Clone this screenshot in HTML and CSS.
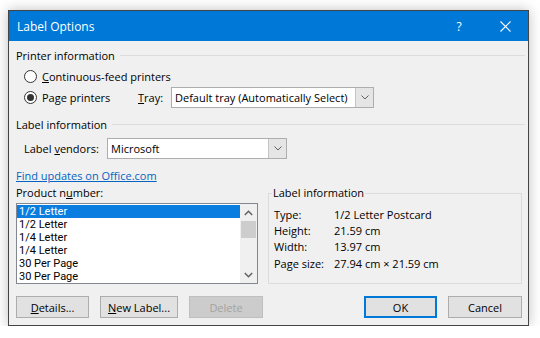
FILE: index.html
```html
<!DOCTYPE html>
<html lang="en">
<head>
    <meta charset="UTF-8">
    <title>Label Options</title>
    <link rel="stylesheet" href="styles.css">
</head>
<body>
    <div class="dialog">
        <div class="titlebar">
            <span class="title">Label Options</span>
            <span class="tb-btn help">?</span>
            <span class="tb-btn">
                <svg width="11" height="11" viewBox="0 0 11 11"><path d="M0.5 0.5 L10.5 10.5 M10.5 0.5 L0.5 10.5" stroke="#fff" stroke-width="1.1"/></svg>
            </span>
        </div>
        <div class="content">
            <div class="group-head"><span>Printer information</span></div>

            <div class="radio-row r1">
                <span class="radio"></span>
                <span><u>C</u>ontinuous-feed printers</span>
            </div>
            <div class="radio-row r2">
                <span class="radio checked"></span>
                <span class="page-label">Pa<u>g</u>e printers</span>
                <span class="tray-label"><u>T</u>ray:</span>
                <div class="combo tray">
                    <span class="combo-text">Default tray (Automatically Select)</span>
                    <span class="combo-btn"><svg width="8" height="5" viewBox="0 0 8 5"><polyline points="0.5,0.5 4,4 7.5,0.5" fill="none" stroke="#606060"/></svg></span>
                </div>
            </div>

            <div class="group-head second"><span>Label information</span></div>

            <div class="vendor-row">
                <span class="vendor-label">Label <u>v</u>endors:</span>
                <div class="combo vendor">
                    <span class="combo-text">Microsoft</span>
                    <span class="combo-btn"><svg width="8" height="5" viewBox="0 0 8 5"><polyline points="0.5,0.5 4,4 7.5,0.5" fill="none" stroke="#606060"/></svg></span>
                </div>
            </div>

            <a class="link" href="#">Find updates on Office.com</a>

            <div class="bottom">
                <div class="left-col">
                    <div class="plabel">Product n<u>u</u>mber:</div>
                    <div class="listbox">
                        <ul class="items">
                            <li class="sel">1/2 Letter</li>
                            <li>1/2 Letter</li>
                            <li>1/4 Letter</li>
                            <li>1/4 Letter</li>
                            <li>30 Per Page</li>
                            <li>30 Per Page</li>
                        </ul>
                        <div class="scrollbar">
                            <span class="arrow"><svg width="9" height="6" viewBox="0 0 9 6"><polyline points="0.8,5 4.5,1.3 8.2,5" fill="none" stroke="#606060" stroke-width="1.5"/></svg></span>
                            <span class="thumb"></span>
                            <span class="track"></span>
                            <span class="arrow"><svg width="9" height="6" viewBox="0 0 9 6"><polyline points="0.8,1 4.5,4.7 8.2,1" fill="none" stroke="#606060" stroke-width="1.5"/></svg></span>
                        </div>
                    </div>
                </div>
                <fieldset class="info">
                    <legend>Label information</legend>
                    <div class="info-grid">
                        <span>Type:</span><span>1/2 Letter Postcard</span>
                        <span>Height:</span><span>21.59 cm</span>
                        <span>Width:</span><span>13.97 cm</span>
                        <span>Page size:</span><span>27.94 cm &times; 21.59 cm</span>
                    </div>
                </fieldset>
            </div>

            <div class="buttons">
                <button class="btn w-details"><u>D</u>etails...</button>
                <button class="btn w-new"><u>N</u>ew Label...</button>
                <button class="btn w-delete" disabled>Delete</button>
                <button class="btn w-ok default">OK</button>
                <button class="btn w-cancel">Cancel</button>
            </div>
        </div>
    </div>
</body>
</html>
```
FILE: styles.css
```css
body {
    margin: 0;
    background-color: #fff;
    font-family: "Open Sans", "Noto Sans", sans-serif;
    font-size: 11px;
    color: #000;
}

.dialog {
    margin: 10px 0 0 8px;
    width: 521px;
    height: 316px;
    box-sizing: border-box;
    border: 1px solid #444;
    background-color: #f0f0f0;
    box-shadow: 0 0 12px rgba(0, 0, 0, 0.25);
}

.titlebar {
    display: flex;
    align-items: center;
    height: 30px;
    padding-left: 8px;
    background-color: #0078d7;
    color: #fff;
    font-size: 12px;
}

.title {
    margin-right: auto;
}

.tb-btn {
    display: flex;
    align-items: center;
    justify-content: center;
    width: 46px;
    height: 30px;
}

.help {
    font-size: 12px;
}

.content {
    padding: 0 6px 0 7px;
}

.group-head {
    display: flex;
    align-items: center;
    height: 14px;
    margin-top: 7px;
}

.group-head::after {
    content: "";
    flex: 1;
    border-top: 1px solid #dcdcdc;
    margin-left: 5px;
    margin-right: -3px;
}

.group-head.second {
    margin-top: 9px;
}

.radio-row {
    display: flex;
    align-items: center;
    padding-left: 8px;
}

.r1 {
    height: 14px;
    margin-top: 7px;
}

.r2 {
    height: 21px;
    margin-top: 4px;
}

.radio {
    width: 13px;
    height: 13px;
    box-sizing: border-box;
    border: 1px solid #333;
    border-radius: 50%;
    background-color: #fff;
    margin-right: 5px;
    display: flex;
    align-items: center;
    justify-content: center;
}

.radio.checked::after {
    content: "";
    width: 7px;
    height: 7px;
    border-radius: 50%;
    background-color: #333;
}

.page-label {
    width: 96px;
}

.tray-label {
    width: 33px;
}

.combo {
    display: flex;
    height: 21px;
    box-sizing: border-box;
    border: 1px solid #adadad;
    background-color: #fff;
}

.combo-text {
    flex: 1;
    padding-left: 3px;
    line-height: 19px;
}

.combo-btn {
    width: 17px;
    display: flex;
    align-items: center;
    justify-content: center;
    background-color: #e5e5e5;
    border-left: 1px solid #c4c4c4;
}

.tray {
    width: 203px;
}

.vendor-row {
    display: flex;
    align-items: center;
    height: 21px;
    margin-top: 7px;
    padding-left: 8px;
}

.vendor-label {
    width: 83px;
}

.vendor {
    width: 180px;
}

.link {
    display: block;
    width: max-content;
    margin-top: 10px;
    line-height: 14px;
    color: #0563c1;
    text-decoration: underline;
}

.bottom {
    display: flex;
    gap: 10px;
    margin-top: 3px;
}

.left-col {
    width: 242px;
}

.plabel {
    line-height: 14px;
    margin-bottom: 3px;
}

.listbox {
    display: flex;
    height: 81px;
    box-sizing: border-box;
    border: 1px solid #828790;
    background-color: #fff;
}

.items {
    flex: 1;
    list-style: none;
    margin: 0;
    padding: 1px 0 0 0;
    font-family: Roboto, "Open Sans", sans-serif;
}

.items li {
    height: 13px;
    line-height: 13px;
    padding-left: 2px;
}

.items li.sel {
    background-color: #0a7ee0;
    color: #fff;
}

.scrollbar {
    width: 17px;
    display: flex;
    flex-direction: column;
    align-items: center;
    background-color: #f0f0f0;
}

.arrow {
    height: 17px;
    display: flex;
    align-items: center;
    justify-content: center;
}

.thumb {
    width: 15px;
    height: 17px;
    background-color: #cdcdcd;
}

.track {
    flex: 1;
}

.info {
    flex: 1;
    min-width: 0;
    margin: 0;
    padding: 0 5px;
    border: 1px solid #dcdcdc;
}

.info legend {
    padding: 0 1px;
    margin-left: -2px;
    line-height: 14px;
}

.info-grid {
    display: grid;
    grid-template-columns: 60px 1fr;
    grid-auto-rows: 16.3px;
    align-items: center;
    margin-top: 6px;
}

.buttons {
    display: flex;
    gap: 11px;
    margin-top: 12px;
}

.btn {
    height: 22px;
    padding: 0;
    font-family: inherit;
    font-size: 11px;
    color: #000;
    background-color: #e1e1e1;
    border: 1px solid #adadad;
}

.btn:disabled {
    color: #a3a3a3;
    background-color: #cccccc;
    border-color: #bfbfbf;
}

.btn.default {
    border: 2px solid #0078d7;
}

.w-details { width: 73px; }
.w-new { width: 78px; }
.w-delete { width: 74px; }
.w-ok { width: 73px; margin-left: auto; }
.w-cancel { width: 74px; }
```
